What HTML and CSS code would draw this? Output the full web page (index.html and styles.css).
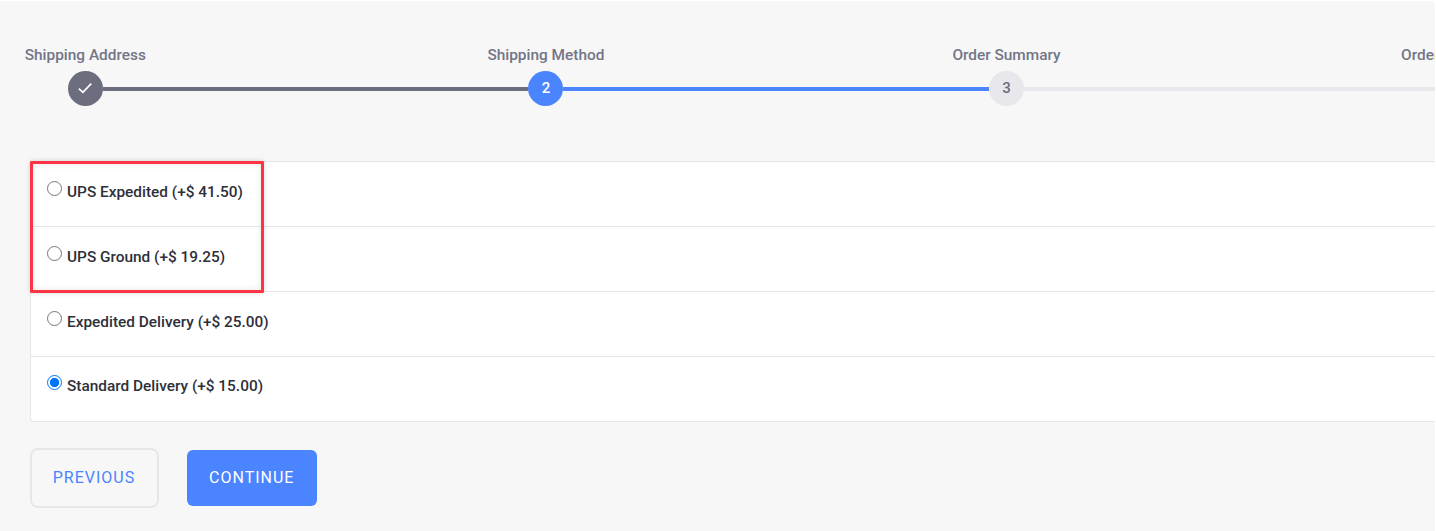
FILE: index.html
```html
<!DOCTYPE html>
<html lang="en">
<head>
<meta charset="utf-8">
<title>Shipping Method</title>
<link rel="stylesheet" href="styles.css">
</head>
<body>
<main class="checkout">
  <ol class="steps">
    <li class="step step-done"><span class="step-label">Shipping Address</span>
      <div class="step-track"><span class="step-dot"><svg class="check" viewBox="0 0 16 16" width="16" height="16"><path d="M1.8 8.6 5.9 12.3 14.2 3.6"/></svg></span></div></li>
    <li class="step step-active"><span class="step-label">Shipping Method</span>
      <div class="step-track"><span class="step-dot">2</span></div></li>
    <li class="step"><span class="step-label">Order Summary</span>
      <div class="step-track"><span class="step-dot">3</span></div></li>
    <li class="step"><span class="step-label">Order Confirmation</span>
      <div class="step-track"><span class="step-dot"></span></div></li>
  </ol>
  <section class="methods">
    <label class="method"><input class="radio" type="radio" name="method"><span class="method-name">UPS Expedited (+$ 41.50)</span></label>
    <label class="method"><input class="radio" type="radio" name="method"><span class="method-name">UPS Ground (+$ 19.25)</span></label>
    <label class="method"><input class="radio" type="radio" name="method"><span class="method-name">Expedited Delivery (+$ 25.00)</span></label>
    <label class="method method-last"><input class="radio" type="radio" name="method" checked><span class="method-name">Standard Delivery (+$ 15.00)</span></label>
    <div class="highlight"></div>
  </section>
  <div class="actions">
    <button class="button button-outline">PREVIOUS</button>
    <button class="button button-primary">CONTINUE</button>
  </div>
</main>
</body>
</html>
```
FILE: styles.css
```css
* { box-sizing: border-box; }
body { margin: 0; background: #fff; font-family: Roboto, "Liberation Sans", sans-serif; }
.checkout {
  width: 1435px;
  height: 530px;
  margin-top: 1px;
  padding-top: 44px;
  background: #f7f7f7;
  overflow: hidden;
}
.steps { display: flex; margin: 0 0 0 -145px; padding: 0; list-style: none; }
.step { flex: 0 0 460.6px; text-align: center; }
.step-label { display: block; height: 26px; font-size: 15.4px; font-weight: 500; line-height: 20px; color: #737587; }
.step-track { display: flex; align-items: center; height: 35px; }
.step-track::before, .step-track::after { content: ""; flex: 1; height: 4px; margin-top: 1px; background: #e7e7ec; }
.step:first-child .step-track::before { background: none; }
.step-done .step-track::after, .step-active .step-track::before { background: #6c6d7f; }
.step-active .step-track::after, .step-active + .step .step-track::before { background: #4b84ff; }
.step-dot {
  display: flex;
  align-items: center;
  justify-content: center;
  width: 35px;
  height: 35px;
  padding-bottom: 2px;
  border-radius: 50%;
  background: #e7e7ec;
  color: #6c6d7f;
  font-size: 15px;
  font-weight: 500;
}
.step-done .step-dot { padding-bottom: 1px; background: #6c6d7f; }
.step-active .step-dot { background: #4b84ff; color: #fff; }
.check { fill: none; stroke: #fff; stroke-width: 1.7; }
.methods {
  position: relative;
  margin: 55px 0 0 30px;
  border: 1px solid #e6e6ea;
  border-right: 0;
  border-radius: 4px 0 0 4px;
  background: #fff;
}
.method { display: flex; align-items: flex-start; gap: 5px; height: 65px; padding: 20px 16px; border-bottom: 1px solid #e4e5eb; }
.method-last { height: 64px; padding-top: 19px; border-bottom: 0; }
.radio {
  flex: none;
  appearance: none;
  width: 15px;
  height: 15px;
  margin: -1px 0 0;
  border: 1px solid #767676;
  border-radius: 50%;
  background: #fff;
}
.radio:checked { border-color: #0075ff; background: radial-gradient(circle, #0075ff 4.3px, #fff 5px); }
.method-name { font-size: 15.4px; font-weight: 500; line-height: 20px; color: #2e2f39; }
.highlight {
  position: absolute;
  top: -1px;
  left: -1px;
  width: 234px;
  height: 132px;
  border: 3px solid #fb3544;
  border-radius: 1px;
  box-shadow: 0 0 5px rgba(0, 0, 0, .16), inset 0 0 6px rgba(0, 0, 0, .1);
}
.actions { display: flex; align-items: center; gap: 28.5px; padding: 26px 0 0 29.5px; }
.button {
  padding: 0;
  border: 0;
  font: 400 16px/20px Roboto, "Liberation Sans", sans-serif;
  letter-spacing: 1px;
}
.button-outline { width: 129px; height: 60px; border: 2px solid #e7e7e7; border-radius: 8px; background: transparent; color: #4b84ff; }
.button-primary { width: 129.5px; height: 56px; border-radius: 6px; background: #4b84ff; color: #fff; }
```
